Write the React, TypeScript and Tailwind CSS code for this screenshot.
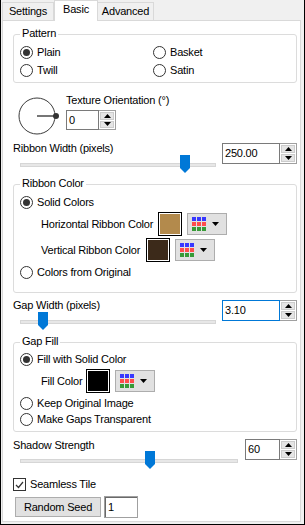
import React from "react";

function Radio({ checked = false, label }: { checked?: boolean; label: string }) {
  return (
    <div className="flex items-center h-[13px]">
      <span className="w-[13px] h-[13px] rounded-full border border-[#333333] bg-white flex items-center justify-center shrink-0">
        {checked && <span className="w-[7px] h-[7px] rounded-full bg-[#333333]" />}
      </span>
      <span className="ml-[4px] whitespace-nowrap">{label}</span>
    </div>
  );
}

function Group({ label, className, children }: { label: string; className: string; children: React.ReactNode }) {
  return (
    <div className={"relative border border-[#dcdcdc] rounded-[3px] " + className}>
      <span className="absolute left-[6px] top-[-8px] px-[2px] bg-white leading-[13px] whitespace-nowrap">{label}</span>
      {children}
    </div>
  );
}

function Arrow({ up = false }: { up?: boolean }) {
  return (
    <svg width="7" height="4" viewBox="0 0 7 4">
      {up ? <path d="M0 4L3.5 0L7 4Z" fill="#000" /> : <path d="M0 0H7L3.5 4Z" fill="#000" />}
    </svg>
  );
}

function Spin({ value, widthClass, focused = false, heightClass = "h-[21px]" }: { value: string; widthClass: string; focused?: boolean; heightClass?: string }) {
  return (
    <div className={"flex " + widthClass + " " + heightClass}>
      <div className={"flex-1 flex items-center pl-[2px] bg-white border " + (focused ? "border-[#0078d7]" : "border-[#7a7a7a]")}>
        {value}
      </div>
      <div className="w-[17px] flex flex-col border border-l-0 border-[#a0a0a0] bg-white p-[1px] gap-[1px]">
        <div className="flex-1 bg-[#e5e5e5] border border-[#cccccc] flex items-center justify-center">
          <Arrow up />
        </div>
        <div className="flex-1 bg-[#e5e5e5] border border-[#cccccc] flex items-center justify-center">
          <Arrow />
        </div>
      </div>
    </div>
  );
}

function Slider({ widthClass, thumbLeft }: { widthClass: string; thumbLeft: number }) {
  return (
    <div className={"relative h-[20px] ml-[7px] " + widthClass}>
      <div className="absolute left-0 right-0 top-[10px] h-[4px] bg-[#e7e7e7] border border-[#d6d6d6]" />
      <svg className="absolute top-[2px]" style={{ left: thumbLeft }} width="10" height="18" viewBox="0 0 10 18">
        <path d="M0 0H10V13L5 18L0 13Z" fill="#0078d7" />
      </svg>
    </div>
  );
}

function ColorButton() {
  return (
    <div className="w-[40px] h-[22px] bg-[#e1e1e1] border border-[#adadad] flex items-center pl-[4px]">
      <div className="grid grid-cols-3 gap-[1px]">
        <span className="w-[4px] h-[4px] bg-[#3838ff]" />
        <span className="w-[4px] h-[4px] bg-[#3838ff]" />
        <span className="w-[4px] h-[4px] bg-[#3838ff]" />
        <span className="w-[4px] h-[4px] bg-[#ff4c4c]" />
        <span className="w-[4px] h-[4px] bg-[#ff4c4c]" />
        <span className="w-[4px] h-[4px] bg-[#ff4c4c]" />
        <span className="w-[4px] h-[4px] bg-[#379b37]" />
        <span className="w-[4px] h-[4px] bg-[#379b37]" />
        <span className="w-[4px] h-[4px] bg-[#379b37]" />
      </div>
      <svg className="ml-[6px]" width="7" height="4" viewBox="0 0 7 4">
        <path d="M0 0H7L3.5 4Z" fill="#000" />
      </svg>
    </div>
  );
}

function Swatch({ colorClass }: { colorClass: string }) {
  return (
    <div className="w-[24px] h-[24px] border border-black bg-white p-[1px] shrink-0">
      <div className={"w-full h-full " + colorClass} />
    </div>
  );
}

export default function App() {
  return (
    <div className="w-[305px] h-[525px] bg-[#f0f0f0] border-l border-r border-b border-black font-['Liberation_Sans',Arial,sans-serif] text-[11px] tracking-[-0.2px] leading-[13px] text-black flex flex-col">
      {/* Tabs */}
      <div className="h-[20px] flex items-end pl-[1px] shrink-0">
        <div className="w-[52px] h-[18px] border border-b-0 border-[#d9d9d9] bg-[#f0f0f0] flex items-center justify-center">
          Settings
        </div>
        <div className="relative z-10 w-[44px] h-[21px] mb-[-1px] border border-b-0 border-[#d9d9d9] bg-white flex items-start justify-center pt-[2px]">
          Basic
        </div>
        <div className="w-[56px] h-[18px] border border-b-0 border-l-0 border-[#d9d9d9] bg-[#f0f0f0] flex items-center justify-center">
          Advanced
        </div>
      </div>

      {/* Panel */}
      <div className="flex-1 ml-[1px] mr-[3px] mb-[2px] bg-white border border-[#d9d9d9] pl-[10px] pr-[3px] flex flex-col">
        {/* Pattern */}
        <Group label="Pattern" className="mt-[13px] h-[49px] shrink-0">
          <div className="pl-[6px] pt-[11px] grid grid-cols-[133px_1fr] gap-y-[5px]">
            <Radio checked label="Plain" />
            <Radio label="Basket" />
            <Radio label="Twill" />
            <Radio label="Satin" />
          </div>
        </Group>

        {/* Dial row */}
        <div className="mt-[11px] flex items-start shrink-0">
          <svg className="ml-[4px] mt-[2px]" width="44" height="40" viewBox="0 0 44 40">
            <circle cx="20" cy="20" r="18" fill="none" stroke="#3c3c3c" strokeWidth="1" />
            <line x1="20" y1="20" x2="39" y2="20" stroke="#3c3c3c" strokeWidth="1.4" />
            <circle cx="39" cy="20" r="3" fill="#333333" />
          </svg>
          <div className="ml-[5px] flex flex-col">
            <span className="whitespace-nowrap">Texture Orientation (°)</span>
            <div className="mt-[3px]">
              <Spin value="0" widthClass="w-[50px]" heightClass="h-[20px]" />
            </div>
          </div>
        </div>

        {/* Ribbon width */}
        <div className="mt-[6px] flex justify-between shrink-0">
          <div className="flex flex-col">
            <span className="whitespace-nowrap">Ribbon Width (pixels)</span>
            <div className="mt-[-2px]">
              <Slider widthClass="w-[196px]" thumbLeft={160} />
            </div>
          </div>
          <div className="mt-[1px]">
            <Spin value="250.00" widthClass="w-[75px]" />
          </div>
        </div>

        {/* Ribbon Color */}
        <Group label="Ribbon Color" className="mt-[11px] h-[109px] shrink-0">
          <div className="pl-[6px] pt-[11px] flex flex-col">
            <Radio checked label="Solid Colors" />
            <div className="mt-[3px] h-[24px] pl-[21px] flex items-center">
              <span className="w-[117px] whitespace-nowrap">Horizontal Ribbon Color</span>
              <Swatch colorClass="bg-[#b38a4c]" />
              <div className="ml-[5px]">
                <ColorButton />
              </div>
            </div>
            <div className="mt-[2px] h-[24px] pl-[21px] flex items-center">
              <span className="w-[105px] whitespace-nowrap">Vertical Ribbon Color</span>
              <Swatch colorClass="bg-[#3c2a1a]" />
              <div className="ml-[5px]">
                <ColorButton />
              </div>
            </div>
            <div className="mt-[4px]">
              <Radio label="Colors from Original" />
            </div>
          </div>
        </Group>

        {/* Gap width */}
        <div className="mt-[6px] flex justify-between shrink-0">
          <div className="flex flex-col">
            <span className="whitespace-nowrap">Gap Width (pixels)</span>
            <div className="mt-[-2px]">
              <Slider widthClass="w-[196px]" thumbLeft={18} />
            </div>
          </div>
          <div className="mt-[1px]">
            <Spin value="3.10" widthClass="w-[75px]" focused />
          </div>
        </div>

        {/* Gap Fill */}
        <Group label="Gap Fill" className="mt-[12px] h-[90px] shrink-0">
          <div className="pl-[6px] pt-[10px] flex flex-col">
            <Radio checked label="Fill with Solid Color" />
            <div className="mt-[3px] h-[24px] pl-[21px] flex items-center">
              <span className="w-[45px] whitespace-nowrap">Fill Color</span>
              <Swatch colorClass="bg-black" />
              <div className="ml-[5px]">
                <ColorButton />
              </div>
            </div>
            <div className="mt-[4px]">
              <Radio label="Keep Original Image" />
            </div>
            <div className="mt-[3px]">
              <Radio label="Make Gaps Transparent" />
            </div>
          </div>
        </Group>

        {/* Shadow strength */}
        <div className="mt-[7px] flex justify-between shrink-0">
          <div className="flex flex-col">
            <span className="whitespace-nowrap">Shadow Strength</span>
            <div className="mt-[-3px]">
              <Slider widthClass="w-[218px]" thumbLeft={125} />
            </div>
          </div>
          <div>
            <Spin value="60" widthClass="w-[52px]" />
          </div>
        </div>

        {/* Seamless tile */}
        <div className="mt-[9px] flex items-center h-[13px] shrink-0">
          <span className="w-[13px] h-[13px] border border-[#333333] bg-white flex items-center justify-center shrink-0">
            <svg width="9" height="8" viewBox="0 0 9 8">
              <path d="M1 4L3.5 6.5L8 1" stroke="#333333" strokeWidth="1.2" fill="none" />
            </svg>
          </span>
          <span className="ml-[4px]">Seamless Tile</span>
        </div>

        {/* Random seed */}
        <div className="mt-[5px] flex items-center shrink-0">
          <div className="ml-[2px] w-[86px] h-[20px] bg-[#e1e1e1] border border-[#adadad] flex items-center justify-center whitespace-nowrap">
            Random Seed
          </div>
          <div className="ml-[3px] w-[34px] h-[22px] bg-white border border-[#a0a0a0] shadow-[inset_1px_1px_0_#696969] flex items-center pl-[3px]">
            1
          </div>
        </div>
      </div>
    </div>
  );
}
